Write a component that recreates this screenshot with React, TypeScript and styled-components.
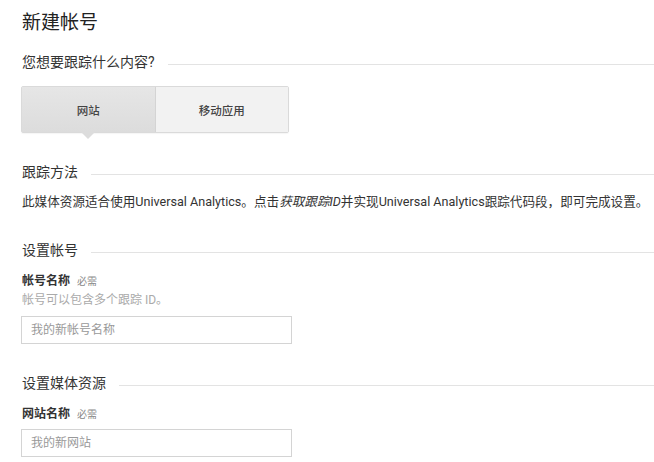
import React, { useState } from "react";
import styled, { createGlobalStyle } from "styled-components";

const GlobalStyle = createGlobalStyle`
  html, body {
    margin: 0;
    padding: 0;
    background: #fff;
  }
  body {
    font-family: Roboto, "Noto Sans CJK SC", sans-serif;
    color: #333;
  }
`;

const Page = styled.div`
  padding: 11px 0 0 22px;
  display: flex;
  flex-direction: column;
`;

const Title = styled.h1`
  margin: 0;
  font-size: 19px;
  line-height: 24px;
  font-weight: 400;
  color: #222;
`;

const SectionHeading = styled.div<{ $top: number }>`
  display: flex;
  align-items: center;
  margin-top: ${(p) => p.$top}px;
  height: 20px;
`;

const HeadingText = styled.h2`
  margin: 0;
  font-size: 14px;
  line-height: 20px;
  font-weight: 400;
  color: #333;
  white-space: nowrap;
`;

const Rule = styled.div`
  flex: 1;
  height: 1px;
  margin: 5px 0 0 13px;
  background: #e3e3e3;
`;

const Toggle = styled.div`
  display: flex;
  margin: 14px 0 0 -1px;
  width: 266px;
  border: 1px solid #dadada;
  border-radius: 2px;
  box-shadow: 0 1px 1px rgba(0, 0, 0, 0.04);
`;

const Segment = styled.button<{ $active?: boolean }>`
  position: relative;
  flex: 1;
  height: 45px;
  border: none;
  padding: 0;
  font-family: inherit;
  font-size: 11.5px;
  font-weight: 500;
  color: #444;
  cursor: pointer;
  background: ${(p) =>
    p.$active ? "linear-gradient(#e6e6e6, #dcdcdc)" : "#f2f2f2"};
  border-right: ${(p) => (p.$active ? "1px solid #d4d4d4" : "none")};

  &::after {
    content: "";
    display: ${(p) => (p.$active ? "block" : "none")};
    position: absolute;
    left: 50%;
    bottom: -7px;
    margin-left: -7px;
    border-left: 7px solid transparent;
    border-right: 7px solid transparent;
    border-top: 7px solid #dcdcdc;
  }
`;

const Paragraph = styled.p`
  margin: 11px 0 0;
  font-size: 12.6px;
  line-height: 18px;
  color: #333;
  white-space: nowrap;

  em {
    font-style: italic;
  }
`;

const FieldLabel = styled.div<{ $top: number }>`
  margin-top: ${(p) => p.$top}px;
  font-size: 12px;
  line-height: 16px;
  font-weight: 700;
  color: #333;
`;

const Required = styled.span`
  margin-left: 7px;
  font-size: 10px;
  font-weight: 400;
  color: #888;
`;

const Help = styled.div`
  margin-top: 2px;
  font-size: 12px;
  line-height: 16px;
  color: #aaa;
`;

const TextInput = styled.input<{ $top: number }>`
  box-sizing: border-box;
  margin: ${(p) => p.$top}px 0 0 -1px;
  width: 271px;
  height: 28px;
  padding: 0 9px;
  border: 1px solid #d4d4d4;
  border-radius: 0;
  font-family: inherit;
  font-size: 12px;
  color: #333;
  outline: none;

  &::placeholder {
    color: #999;
  }
`;

function Heading({ top, children }: { top: number; children: React.ReactNode }) {
  return (
    <SectionHeading $top={top}>
      <HeadingText>{children}</HeadingText>
      <Rule />
    </SectionHeading>
  );
}

export default function App() {
  const [target, setTarget] = useState("web");

  return (
    <>
      <GlobalStyle />
      <Page>
        <Title>新建帐号</Title>

        <Heading top={17}>您想要跟踪什么内容?</Heading>
        <Toggle>
          <Segment $active={target === "web"} onClick={() => setTarget("web")}>
            网站
          </Segment>
          <Segment $active={target === "app"} onClick={() => setTarget("app")}>
            移动应用
          </Segment>
        </Toggle>

        <Heading top={29}>跟踪方法</Heading>
        <Paragraph>
          此媒体资源适合使用Universal Analytics。点击<em>获取跟踪ID</em>
          并实现Universal Analytics跟踪代码段，即可完成设置。
        </Paragraph>

        <Heading top={29}>设置帐号</Heading>
        <FieldLabel $top={13}>
          帐号名称<Required>必需</Required>
        </FieldLabel>
        <Help>帐号可以包含多个跟踪 ID。</Help>
        <TextInput $top={8} placeholder="我的新帐号名称" />

        <Heading top={29}>设置媒体资源</Heading>
        <FieldLabel $top={13}>
          网站名称<Required>必需</Required>
        </FieldLabel>
        <TextInput $top={6} placeholder="我的新网站" />
      </Page>
    </>
  );
}
